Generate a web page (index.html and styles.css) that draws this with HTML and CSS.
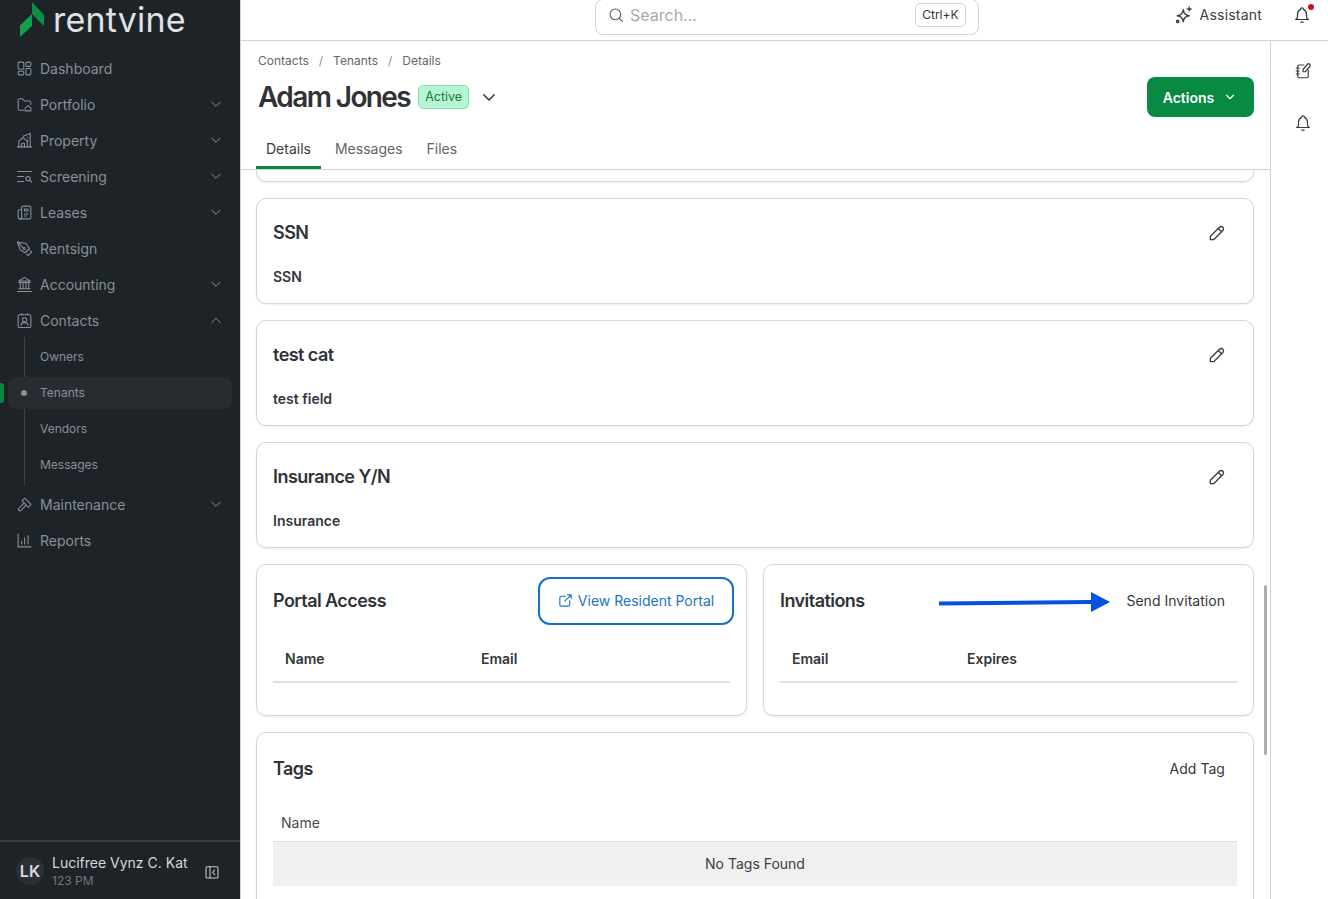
FILE: index.html
```html
<!DOCTYPE html>
<html lang="en">
<head>
  <meta charset="UTF-8">
  <title>Adam Jones - Rentvine</title>
  <link rel="stylesheet" href="styles.css">
</head>
<body>

  <div class="app">

    <!-- Sidebar -->
    <aside class="sidebar">
      <div class="logo">
        <svg class="logo-mark" viewBox="0 0 26 36">
          <polygon points="1,24.5 13,13 13,25 1,36" fill="#0fa04c"/>
          <polygon points="13,1 25,14 25,25 13,13" fill="#0b8f45"/>
        </svg>
        <span class="logo-text">rentvine</span>
      </div>

      <nav class="nav">
        <a class="nav-item">
          <svg class="nav-icon" viewBox="0 0 24 24"><rect x="3" y="3" width="8" height="10" rx="1.5"/><rect x="14" y="3" width="7" height="6" rx="1.5"/><rect x="3" y="16" width="8" height="5" rx="1.5"/><rect x="14" y="12" width="7" height="9" rx="1.5"/></svg>
          <span>Dashboard</span>
        </a>
        <a class="nav-item">
          <svg class="nav-icon" viewBox="0 0 24 24"><path d="M11 20H5a2 2 0 0 1-2-2V6a2 2 0 0 1 2-2h4l3 3h7a2 2 0 0 1 2 2v3"/><path d="M13 21v-4l4-3.500 4 3.500v4z"/></svg>
          <span>Portfolio</span>
          <svg class="nav-chevron" viewBox="0 0 24 24"><path d="M5 9l7 7 7-7"/></svg>
        </a>
        <a class="nav-item">
          <svg class="nav-icon" viewBox="0 0 24 24"><path d="M2 21h20"/><path d="M4 21v-8l6-5 6 5v8"/><path d="M8 21v-5h4v5"/><path d="M10 6l10-4v19"/><path d="M16 8h1M16 12h1"/></svg>
          <span>Property</span>
          <svg class="nav-chevron" viewBox="0 0 24 24"><path d="M5 9l7 7 7-7"/></svg>
        </a>
        <a class="nav-item">
          <svg class="nav-icon" viewBox="0 0 24 24"><path d="M2 5h20M2 12h9M2 19h9"/><circle cx="17" cy="15" r="3"/><path d="M19.500 17.500L22 20"/></svg>
          <span>Screening</span>
          <svg class="nav-chevron" viewBox="0 0 24 24"><path d="M5 9l7 7 7-7"/></svg>
        </a>
        <a class="nav-item">
          <svg class="nav-icon" viewBox="0 0 24 24"><path d="M8 18V5a2 2 0 0 1 2-2h9a2 2 0 0 1 2 2v14a2 2 0 0 1-2 2H6a3 3 0 0 1-3-3V10a2 2 0 0 1 2-2h3"/><path d="M8 18a3 3 0 0 1-3 3"/><path d="M12 7h5v3h-5zM12 14h5M12 17h3"/></svg>
          <span>Leases</span>
          <svg class="nav-chevron" viewBox="0 0 24 24"><path d="M5 9l7 7 7-7"/></svg>
        </a>
        <a class="nav-item">
          <svg class="nav-icon" viewBox="0 0 24 24"><path d="M2 3l12 2 5 7-6 6-7-4z"/><path d="M2 3l8 8"/><circle cx="11.500" cy="12" r="1.500"/><path d="M15 20l2 2 5-5-2-2"/></svg>
          <span>Rentsign</span>
        </a>
        <a class="nav-item">
          <svg class="nav-icon" viewBox="0 0 24 24"><path d="M2 22h20M4 18h16M4 9h16"/><path d="M12 2l8 5H4z"/><path d="M6 9v9M10 9v9M14 9v9M18 9v9"/></svg>
          <span>Accounting</span>
          <svg class="nav-chevron" viewBox="0 0 24 24"><path d="M5 9l7 7 7-7"/></svg>
        </a>
        <a class="nav-item">
          <svg class="nav-icon" viewBox="0 0 24 24"><rect x="3" y="4" width="18" height="18" rx="2"/><path d="M8 2v2M16 2v2"/><circle cx="12" cy="11" r="3"/><path d="M7 19c0-3 2.500-4 5-4s5 1 5 4"/></svg>
          <span>Contacts</span>
          <svg class="nav-chevron" viewBox="0 0 24 24"><path d="M5 16l7-7 7 7"/></svg>
        </a>

        <div class="subnav">
          <a class="sub-item">Owners</a>
          <a class="sub-item active">Tenants</a>
          <a class="sub-item">Vendors</a>
          <a class="sub-item">Messages</a>
        </div>

        <a class="nav-item">
          <svg class="nav-icon" viewBox="0 0 24 24"><path d="M11.400 10l-7.400 7.400a2.100 2.100 0 0 0 3 3l7.400-7.400"/><path d="M18.100 15.300l2.600-2.600a1 1 0 0 0 0-1.400l-7.600-7.600a1 1 0 0 0-1.400 0l-2.600 2.600a1 1 0 0 0 0 1.400l7.600 7.600a1 1 0 0 0 1.400 0z"/></svg>
          <span>Maintenance</span>
          <svg class="nav-chevron" viewBox="0 0 24 24"><path d="M5 9l7 7 7-7"/></svg>
        </a>
        <a class="nav-item">
          <svg class="nav-icon" viewBox="0 0 24 24"><path d="M3 3v18h18"/><path d="M8 17v-4M12 17V8M17 17V5"/></svg>
          <span>Reports</span>
        </a>
      </nav>

      <div class="user">
        <div class="avatar">LK</div>
        <div class="user-info">
          <div class="user-name">Lucifree Vynz C. Kat</div>
          <div class="user-sub">123 PM</div>
        </div>
        <svg class="collapse-icon" viewBox="0 0 24 24"><rect x="3" y="4" width="18" height="17" rx="2"/><path d="M9 4v17"/><path d="M16 9l-3 3.500 3 3.500"/></svg>
      </div>
    </aside>

    <div class="page">

      <!-- Top bar -->
      <header class="topbar">
        <div class="search">
          <svg class="search-icon" viewBox="0 0 24 24"><circle cx="11" cy="11" r="8"/><path d="M17 17l4.500 4.500"/></svg>
          <span class="search-text">Search...</span>
          <span class="kbd">Ctrl+K</span>
        </div>
        <div class="assistant">
          <svg class="assistant-icon" viewBox="0 0 24 24"><path d="M11 5c.6 5 3 7.500 8 8-5 .5-7.400 3-8 8-.6-5-3-7.500-8-8 5-.5 7.400-3 8-8z"/><path d="M19 1.500v5M16.500 4h5"/><circle cx="3.500" cy="20.500" r="1.500"/></svg>
          <span>Assistant</span>
        </div>
        <div class="bell">
          <svg class="bell-icon" viewBox="0 0 24 24"><path d="M10 4.500a2 2 0 0 1 4 0 7 7 0 0 1 4 6.500v3a4 4 0 0 0 2.500 4h-17A4 4 0 0 0 6 14v-3a7 7 0 0 1 4-6.500z"/><path d="M10.500 21.500h3"/></svg>
          <span class="bell-dot"></span>
        </div>
      </header>

      <div class="workspace">
        <main class="main">

          <!-- Page header -->
          <div class="page-head">
            <div class="crumbs">
              <span>Contacts</span><span class="sep">/</span><span>Tenants</span><span class="sep">/</span><span>Details</span>
            </div>
            <div class="title-row">
              <h1>Adam Jones</h1>
              <span class="badge">Active</span>
              <svg class="title-chevron" viewBox="0 0 24 24"><path d="M5 9l7 7 7-7"/></svg>
              <button class="btn-actions">Actions
                <svg viewBox="0 0 24 24"><path d="M6 9l6 6 6-6"/></svg>
              </button>
            </div>
            <div class="tabs">
              <a class="tab active">Details</a>
              <a class="tab">Messages</a>
              <a class="tab">Files</a>
            </div>
          </div>

          <!-- Scrolled content -->
          <div class="content">
            <div class="card card-tail"></div>

            <section class="card">
              <div class="card-head">
                <h3>SSN</h3>
                <svg class="edit-icon" viewBox="0 0 24 24"><path d="M4 20v-4L15 5a2.800 2.800 0 0 1 4 4L8 20z"/><path d="M13.500 6.500l4 4"/></svg>
              </div>
              <div class="field">SSN</div>
            </section>

            <section class="card">
              <div class="card-head">
                <h3>test cat</h3>
                <svg class="edit-icon" viewBox="0 0 24 24"><path d="M4 20v-4L15 5a2.800 2.800 0 0 1 4 4L8 20z"/><path d="M13.500 6.500l4 4"/></svg>
              </div>
              <div class="field">test field</div>
            </section>

            <section class="card">
              <div class="card-head">
                <h3>Insurance Y/N</h3>
                <svg class="edit-icon" viewBox="0 0 24 24"><path d="M4 20v-4L15 5a2.800 2.800 0 0 1 4 4L8 20z"/><path d="M13.500 6.500l4 4"/></svg>
              </div>
              <div class="field">Insurance</div>
            </section>

            <div class="two-col">
              <section class="card">
                <div class="card-head">
                  <h3>Portal Access</h3>
                  <button class="btn-portal">
                    <svg viewBox="0 0 24 24"><path d="M12 6H6a2 2 0 0 0-2 2v10a2 2 0 0 0 2 2h10a2 2 0 0 0 2-2v-6"/><path d="M11 13l9-9M15 4h5v5"/></svg>
                    View Resident Portal
                  </button>
                </div>
                <div class="mini-table portal-cols">
                  <span>Name</span><span>Email</span>
                </div>
              </section>

              <section class="card invitations">
                <div class="card-head">
                  <h3>Invitations</h3>
                  <a class="link-btn">Send Invitation</a>
                </div>
                <div class="mini-table invite-cols">
                  <span>Email</span><span>Expires</span>
                </div>
                <!-- annotation drawn over the screenshot -->
                <svg class="arrow" viewBox="0 0 174 20"><path d="M0 9.500L152 8V0l19 10-19 10v-8L0 13.500z" fill="#0551e0"/></svg>
              </section>
            </div>

            <section class="card tags">
              <div class="card-head">
                <h3>Tags</h3>
                <a class="link-btn">Add Tag</a>
              </div>
              <div class="tags-head">Name</div>
              <div class="tags-empty">No Tags Found</div>
            </section>
          </div>

          <div class="scrollbar"></div>
        </main>

        <!-- Right rail -->
        <aside class="rail">
          <svg class="rail-icon" viewBox="0 0 24 24"><path d="M13 4H7a2 2 0 0 0-2 2v13a2 2 0 0 0 2 2h10a2 2 0 0 0 2-2v-8"/><path d="M3 8h4M3 12h4M3 16h4"/><path d="M12 13v-3l6-7a2 2 0 0 1 3 3l-6 7z"/></svg>
          <svg class="rail-icon" viewBox="0 0 24 24"><path d="M10 4.500a2 2 0 0 1 4 0 7 7 0 0 1 4 6.500v3a4 4 0 0 0 2.500 4h-17A4 4 0 0 0 6 14v-3a7 7 0 0 1 4-6.500z"/><path d="M10.500 21.500h3"/></svg>
        </aside>
      </div>
    </div>
  </div>

</body>
</html>
```

FILE: styles.css
```css
* {
  box-sizing: border-box;
}

body {
  margin: 0;
  font-family: Inter, 'Noto Sans', sans-serif;
  font-size: 14px;
  color: #2f3337;
  background-color: #fff;
  overflow: hidden;
}

svg {
  fill: none;
  stroke: currentColor;
  stroke-width: 1.6;
  stroke-linecap: round;
  stroke-linejoin: round;
  flex: none;
}

.app {
  display: flex;
  height: 100vh;
}

/* Sidebar */
.sidebar {
  width: 240px;
  flex: none;
  display: flex;
  flex-direction: column;
  background-color: #1e2328;
  color: #87909b;
}

.logo {
  height: 50px;
  display: flex;
  align-items: flex-start;
  padding: 1px 0 0 19px;
  gap: 8px;
}

.logo-mark {
  width: 26px;
  height: 36px;
  stroke: none;
}

.logo-text {
  margin-top: 1px;
  font-size: 34px;
  line-height: 36px;
  color: #dfe2e4;
  font-weight: 400;
  letter-spacing: 0.2px;
}

.nav {
  flex: 1;
}

.nav-item {
  height: 36px;
  display: flex;
  align-items: center;
  padding: 0 17px 0 16px;
  gap: 7px;
}

.nav-icon {
  width: 17px;
  height: 17px;
  stroke-width: 1.5;
}

.nav-chevron {
  width: 14px;
  height: 14px;
  margin-left: auto;
  stroke-width: 1.7;
}

.subnav {
  position: relative;
  padding-bottom: 4px;
}

.subnav::before {
  content: "";
  position: absolute;
  left: 24px;
  top: -1px;
  bottom: 1px;
  width: 1px;
  background-color: #3d4248;
}

.sub-item {
  height: 36px;
  display: flex;
  align-items: center;
  padding-left: 40px;
  font-size: 12px;
  position: relative;
}

.sub-item.active {
  background-color: #282c31;
  border-radius: 8px;
  height: 32px;
  margin: 3px 8px 1px;
  padding: 0 0 2px 32px;
}

/* bullet */
.sub-item.active::before {
  content: "";
  position: absolute;
  left: 13px;
  top: 13px;
  width: 6px;
  height: 6px;
  border-radius: 50%;
  background-color: #87909b;
}

/* green marker at the sidebar edge */
.sub-item.active::after {
  content: "";
  position: absolute;
  left: -8px;
  top: 6px;
  width: 4px;
  height: 20px;
  background-color: #08873f;
  border-radius: 0 3px 3px 0;
}

.user {
  height: 59px;
  border-top: 2px solid #3a3e43;
  display: flex;
  align-items: center;
  padding: 2px 20px 0 16px;
  gap: 8px;
}

.avatar {
  width: 28px;
  height: 28px;
  margin-top: -2px;
  border-radius: 50%;
  background-color: #2a3035;
  color: #d8dbde;
  font-size: 16px;
  font-weight: 600;
  display: flex;
  align-items: center;
  justify-content: center;
}

.user-name {
  color: #d5d8db;
  font-size: 14px;
  line-height: 18px;
  white-space: nowrap;
}

.user-sub {
  color: #6d7680;
  font-size: 12px;
  line-height: 16px;
  margin-top: 1px;
}

.collapse-icon {
  width: 16px;
  height: 16px;
  margin-left: auto;
  color: #c4c8cb;
}

/* Page */
.page {
  flex: 1;
  min-width: 0;
  display: flex;
  flex-direction: column;
  border-left: 1px solid #d2d2d2;
}

.topbar {
  height: 41px;
  flex: none;
  display: flex;
  align-items: flex-start;
  border-bottom: 1px solid #d2d2d2;
}

.search {
  width: 384px;
  height: 36px;
  margin: -1px 0 0 354px;
  border: 1px solid #d2d2d2;
  border-radius: 8px;
  display: flex;
  align-items: center;
  padding: 0 12px 4px 12px;
  gap: 6px;
}

.search-icon {
  width: 16px;
  height: 16px;
  color: #55595e;
}

.search-text {
  font-size: 16px;
  color: #a4abb0;
  flex: 1;
}

.kbd {
  border: 1px solid #d2d2d2;
  border-radius: 5px;
  font-size: 12px;
  padding: 0 6.5px;
  height: 24px;
  line-height: 22px;
  color: #33373b;
}

.assistant {
  display: flex;
  align-items: center;
  gap: 7px;
  height: 29px;
  margin-left: auto;
  letter-spacing: 0.2px;
  color: #3c4044;
}

.assistant-icon {
  width: 18px;
  height: 18px;
  stroke-width: 1.9;
}

.bell {
  position: relative;
  margin: 6px 17px 0 31px;
  width: 18px;
  height: 18px;
}

.bell-icon {
  width: 18px;
  height: 18px;
  display: block;
}

.bell-dot {
  position: absolute;
  right: -3px;
  top: -2px;
  width: 6px;
  height: 6px;
  border-radius: 50%;
  background-color: #c8101e;
}

.workspace {
  flex: 1;
  min-height: 0;
  display: flex;
}

.main {
  flex: 1;
  min-width: 0;
  display: flex;
  flex-direction: column;
  position: relative;
}

.page-head {
  height: 129px;
  flex: none;
  border-bottom: 1px solid #d2d2d2;
  padding: 0 16px 0 15px;
}

.crumbs {
  display: flex;
  gap: 10px;
  padding: 13px 0 0 2px;
  font-size: 12px;
  line-height: 14px;
  color: #62676c;
}

.sep {
  color: #8f9499;
}

.title-row {
  display: flex;
  align-items: center;
  height: 40px;
  margin-top: 9px;
  padding-left: 2px;
}

h1 {
  margin: 0;
  font-size: 28px;
  font-weight: 600;
  letter-spacing: -1.6px;
  color: #2f3337;
}

.badge {
  height: 24px;
  margin-left: 8px;
  padding: 0 6px;
  line-height: 22px;
  font-size: 12.5px;
  background-color: #b4f6d2;
  border: 1px solid #84e0ab;
  border-radius: 5px;
  color: #1b7844;
}

.title-chevron {
  width: 18px;
  height: 18px;
  margin-left: 11px;
  stroke-width: 2;
}

.btn-actions {
  margin-left: auto;
  width: 107px;
  height: 40px;
  padding: 0 1px 0 0;
  background-color: #088a43;
  border: none;
  border-radius: 8px;
  color: white;
  font-family: inherit;
  font-size: 14px;
  font-weight: 600;
  display: flex;
  align-items: center;
  justify-content: center;
  gap: 9px;
}

.btn-actions svg {
  width: 14px;
  height: 14px;
  stroke-width: 2;
}

.tabs {
  display: flex;
  margin-top: 12px;
}

.tab {
  height: 40px;
  padding: 0 10px 2px;
  margin-right: 4px;
  display: flex;
  align-items: center;
  color: #5f6469;
}

.tab.active {
  color: #383c40;
  border-bottom: 3px solid #08873f;
  padding: 1px 10px 0;
}

.content {
  flex: 1;
  min-height: 0;
  overflow: hidden;
  padding: 0 16px 0 15px;
  display: flex;
  flex-direction: column;
  gap: 16px;
}

.card {
  background-color: #fff;
  border: 1px solid #d6d6d6;
  border-radius: 10px;
  box-shadow: 0 1px 2px rgba(0, 0, 0, 0.08);
  padding: 0 16px;
  height: 106px;
  flex: none;
}

.card-tail {
  height: 12px;
  border-top: none;
  border-radius: 0 0 10px 10px;
}

.card-head {
  height: 67px;
  margin-bottom: 1px;
  display: flex;
  align-items: center;
  justify-content: space-between;
}

h3 {
  margin: 0;
  font-size: 18px;
  font-weight: 600;
  letter-spacing: -0.55px;
  color: #2f3337;
}

.edit-icon {
  width: 20px;
  height: 20px;
  margin-right: 10px;
  color: #3a3e42;
}

.field {
  font-weight: 600;
  line-height: 20px;
  color: #33373b;
}

.two-col {
  display: grid;
  grid-template-columns: 1fr 1fr;
  gap: 16px;
  flex: none;
}

.two-col .card {
  height: 152px;
  position: relative;
  padding-top: 2px;
}

.two-col .card-head {
  height: 66px;
  margin-bottom: 0;
}

.btn-portal {
  width: 196px;
  height: 48px;
  margin: 2px -4px 0 0;
  padding: 0 1px 2px 0;
  background-color: #fff;
  border: 2px solid #1570c8;
  border-radius: 12px;
  color: #1a73c9;
  font-family: inherit;
  font-size: 14px;
  display: flex;
  align-items: center;
  justify-content: center;
  gap: 4px;
}

.btn-portal svg {
  width: 17px;
  height: 17px;
}

.link-btn {
  margin-right: 12px;
  letter-spacing: 0.03px;
  color: #33373b;
}

.mini-table {
  height: 49px;
  margin-top: 1px;
  border-bottom: 2px solid #dedede;
  display: grid;
  align-items: center;
  padding: 1px 12px 0;
  font-weight: 600;
  color: #33373b;
}

.portal-cols {
  grid-template-columns: 196px 1fr;
}

.invite-cols {
  grid-template-columns: 175px 1fr;
}

.arrow {
  position: absolute;
  left: 175px;
  top: 27px;
  width: 174px;
  height: 20px;
  stroke: none;
}

.tags {
  height: 300px;
}

.tags .card-head {
  height: 70px;
  margin-bottom: 2px;
}

.tags-head {
  height: 37px;
  padding: 8px 8px 0;
  line-height: 20px;
  color: #474b4f;
  border-bottom: 1px solid #dedede;
}

.tags-empty {
  height: 44px;
  padding-bottom: 2px;
  background-color: #f0f0f0;
  display: flex;
  align-items: center;
  justify-content: center;
  color: #3a3e42;
}

/* overlay scrollbar thumb */
.scrollbar {
  position: absolute;
  right: 3px;
  top: 544px;
  width: 3px;
  height: 170px;
  background-color: #a9aeb3;
  border-radius: 2px;
}

.rail {
  width: 58px;
  flex: none;
  border-left: 1px solid #d2d2d2;
  display: flex;
  flex-direction: column;
  align-items: center;
  padding: 21px 0 0 7px;
  gap: 34px;
  color: #3a3e42;
}

.rail-icon {
  width: 18px;
  height: 18px;
}
```
